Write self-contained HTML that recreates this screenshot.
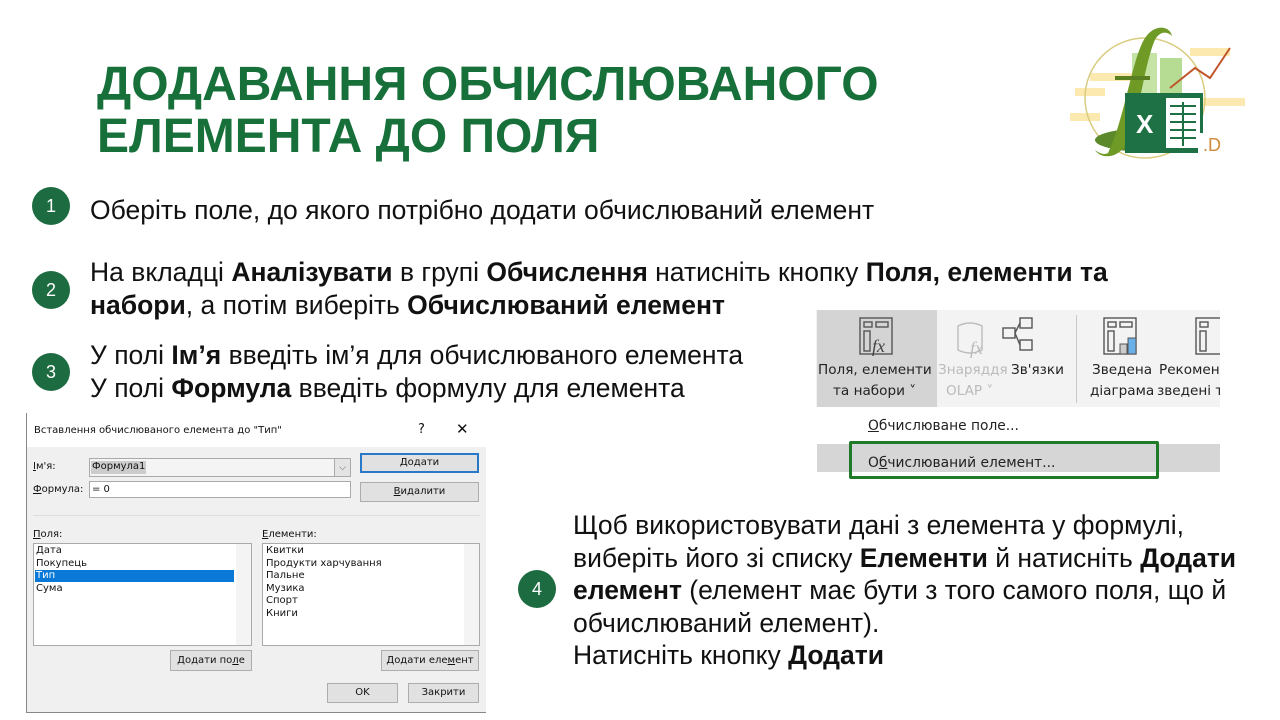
<!DOCTYPE html>
<html><head><meta charset="utf-8"><style>
*{margin:0;padding:0;box-sizing:border-box}
body{width:1280px;height:720px;background:#fff;position:relative;overflow:hidden;font-family:"Liberation Sans",Arial,sans-serif;color:#111}
.a{position:absolute}
.t{left:97px;top:59px;font-size:48px;font-weight:bold;color:#17703a;line-height:52px;white-space:nowrap}
.c{width:38px;height:38px;border-radius:50%;background:#1d6b40;color:#fff;font-size:18px;text-align:center;line-height:38px}
.p{font-size:26.5px;line-height:33px;white-space:nowrap;color:#111}
.d{font-family:"DejaVu Sans",sans-serif;font-size:10px;color:#111;white-space:nowrap}
.btn{position:absolute;background:#e1e1e1;border:1px solid #adadad;font-family:"DejaVu Sans",sans-serif;font-size:10px;text-align:center;color:#111}
.box{position:absolute;background:#fff;border:1px solid #aaa}
.r{font-family:"DejaVu Sans",sans-serif;font-size:13.6px;color:#222;white-space:nowrap;position:absolute}
</style></head><body>
<div class="a t">ДОДАВАННЯ ОБЧИСЛЮВАНОГО<br>ЕЛЕМЕНТА ДО ПОЛЯ</div>

<svg class="a" style="left:1070px;top:18px" width="180" height="145" viewBox="0 0 180 145">
<rect x="20" y="55" width="45" height="8" fill="#fbe9b0"/><rect x="5" y="70" width="30" height="8" fill="#fbe9b0"/>
<rect x="120" y="30" width="40" height="8" fill="#fbe9b0"/><rect x="130" y="80" width="45" height="8" fill="#fbe9b0"/>
<rect x="0" y="95" width="30" height="8" fill="#fbe9b0"/>
<circle cx="75" cy="80" r="60" fill="none" stroke="#d9cc80" stroke-width="1.5"/>
<rect x="62" y="35" width="25" height="90" fill="#c5e3a5"/><rect x="90" y="40" width="22" height="85" fill="#b6dc94"/>
<ellipse cx="80" cy="122" rx="55" ry="12" fill="#5c8a2a"/>
<path d="M38 135 C55 100 62 40 75 20 C85 5 100 8 102 18 C96 12 88 14 84 24 C72 55 68 110 55 128 C45 142 30 140 25 132 C30 136 35 137 38 135Z" fill="#6f9a26"/>
<path d="M45 60 H80" stroke="#5a7f20" stroke-width="4"/>
<rect x="55" y="75" width="78" height="60" fill="#1e7145"/>
<rect x="96" y="80" width="34" height="50" fill="#fff"/>
<g stroke="#1e7145" stroke-width="2"><path d="M100 88H126M100 96H126M100 104H126M100 112H126M100 120H126M113 84V128"/></g>
<text x="66" y="115" font-family="Liberation Sans" font-weight="bold" font-size="26" fill="#fff">X</text>
<path d="M100 70 L125 50 L140 60 L160 30" fill="none" stroke="#c0552a" stroke-width="2"/>
<rect x="128" y="115" width="35" height="22" fill="#fff"/>
<text x="133" y="133" font-family="Liberation Sans" font-size="18" fill="#d08a3a">.D</text>
</svg>

<div class="a c" style="left:32px;top:187px">1</div>
<div class="a c" style="left:32px;top:271px">2</div>
<div class="a c" style="left:32px;top:353px">3</div>
<div class="a c" style="left:518px;top:570px">4</div>

<div class="a p" style="left:90px;top:194px">Оберіть поле, до якого потрібно додати обчислюваний елемент</div>
<div class="a p" style="left:90px;top:256px">На вкладці <b>Аналізувати</b> в групі <b>Обчислення</b> натисніть кнопку <b>Поля, елементи та</b><br><b>набори</b>, а потім виберіть <b>Обчислюваний елемент</b></div>
<div class="a p" style="left:90px;top:339px">У полі <b>Ім’я</b> введіть ім’я для обчислюваного елемента<br>У полі <b>Формула</b> введіть формулу для елемента</div>
<div class="a p" style="left:573px;top:509px;line-height:32.5px">Щоб використовувати дані з елемента у формулі,<br>виберіть його зі списку <b>Елементи</b> й натисніть <b>Додати</b><br><b>елемент</b> (елемент має бути з того самого поля, що й<br>обчислюваний елемент).<br>Натисніть кнопку <b>Додати</b></div>

<div class="a" style="left:816px;top:310px;width:404px;height:97px;background:#f3f3f3"></div>
<div class="a" style="left:817px;top:310px;width:120px;height:97px;background:#d4d4d4"></div>
<div class="a" style="left:1076px;top:315px;width:1px;height:88px;background:#c8c8c8"></div>
<div class="a" style="left:816px;top:407px;width:404px;height:83px;background:#fff"></div>
<div class="a" style="left:817px;top:444px;width:403px;height:28px;background:#d6d6d6"></div>
<div class="a" style="left:849px;top:441px;width:310px;height:38px;border:3px solid #1f7a2a;border-radius:2px"></div>
<svg class="a" style="left:858px;top:316px" width="362" height="45">
<g fill="none" stroke="#555" stroke-width="1.4">
<rect x="2" y="2" width="32" height="36"/><rect x="6" y="6" width="8" height="5"/><rect x="18" y="6" width="12" height="5"/><rect x="6" y="15" width="6" height="20"/>
<path d="M100 10 Q112 4 124 10 V34 Q112 40 100 34Z" stroke="#bbb"/>
<rect x="162" y="2" width="12" height="10"/><rect x="162" y="24" width="12" height="10"/><rect x="145" y="12" width="12" height="10"/><path d="M157 17 L162 7 M157 17 L162 29"/>
<rect x="246" y="2" width="32" height="36"/><rect x="250" y="6" width="8" height="5"/><rect x="262" y="6" width="12" height="5"/><rect x="250" y="15" width="6" height="20"/>
<rect x="338" y="2" width="32" height="36"/><rect x="342" y="6" width="8" height="5"/><rect x="342" y="15" width="6" height="20"/>
</g>
<rect x="270" y="22" width="8" height="16" fill="#6ab0e8" stroke="#555"/><rect x="262" y="28" width="7" height="10" fill="#ccc" stroke="#555"/>
<text x="14" y="36" font-family="Liberation Serif" font-style="italic" font-size="18" fill="#444">fx</text>
<text x="112" y="38" font-family="Liberation Serif" font-style="italic" font-size="18" fill="#bbb">fx</text>
</svg>
<div class="r" style="left:818px;top:362px">Поля, елементи</div>
<div class="r" style="left:833px;top:383px">та набори ˅</div>
<div class="r" style="left:938px;top:362px;color:#bbb">Знаряддя</div>
<div class="r" style="left:946px;top:383px;color:#bbb">OLAP ˅</div>
<div class="r" style="left:1011px;top:362px">Зв'язки</div>
<div class="r" style="left:1092px;top:362px">Зведена</div>
<div class="r" style="left:1090px;top:383px">діаграма</div>
<div class="r" style="left:1159px;top:362px;width:61px;overflow:hidden">Рекомен</div>
<div class="r" style="left:1157px;top:383px;width:63px;overflow:hidden">зведені т</div>
<div class="r" style="left:868px;top:418px;font-size:13.8px"><u>О</u>бчислюване поле...</div>
<div class="r" style="left:868px;top:455px;font-size:13.8px">О<u>б</u>числюваний елемент...</div>

<div class="a" style="left:26px;top:413px;width:460px;height:300px;background:#fff;border-left:1px solid #888;border-bottom:1px solid #888"></div>
<div class="a" style="left:27px;top:447px;width:459px;height:265px;background:#f0f0f0"></div>
<div class="a d" style="left:34px;top:425px;font-size:10px">Вставлення обчислюваного елемента до "Тип"</div>
<div class="a d" style="left:418px;top:422px;font-size:13px">?</div>
<div class="a d" style="left:456px;top:420px;font-size:15px">✕</div>
<div class="a d" style="left:33px;top:461px"><u>І</u>м'я:</div>
<div class="a d" style="left:33px;top:484px"><u>Ф</u>ормула:</div>
<div class="box" style="left:89px;top:458px;width:262px;height:19px;background:#f4f4f4"></div>
<div class="a" style="left:91px;top:461px;width:55px;height:13px;background:#ccc"></div>
<div class="a d" style="left:92px;top:461px">Формула1</div>
<div class="a" style="left:334px;top:459px;width:16px;height:17px;background:#e4e4e4;border-left:1px solid #aaa;font-size:9px;text-align:center;line-height:17px;color:#555">⌵</div>
<div class="box" style="left:89px;top:481px;width:262px;height:17px"></div>
<div class="a d" style="left:92px;top:484px">= 0</div>
<div class="btn" style="left:360px;top:453px;width:119px;height:20px;border:2px solid #2a78c8;line-height:16px">Додати</div>
<div class="btn" style="left:360px;top:482px;width:119px;height:20px;line-height:18px"><u>В</u>идалити</div>
<div class="a" style="left:33px;top:515px;width:447px;height:1px;background:#ddd"></div>
<div class="a d" style="left:33px;top:529px"><u>П</u>оля:</div>
<div class="a d" style="left:262px;top:529px"><u>Е</u>лементи:</div>
<div class="box" style="left:33px;top:543px;width:219px;height:103px"></div>
<div class="a" style="left:236px;top:544px;width:15px;height:101px;background:#f4f4f4"></div>
<div class="a" style="left:35px;top:570px;width:199px;height:12px;background:#0a78d7"></div>
<div class="a d" style="left:36px;top:545px;line-height:12.5px">Дата<br>Покупець<br><span style="color:#fff">Тип</span><br>Сума</div>
<div class="box" style="left:262px;top:543px;width:218px;height:103px"></div>
<div class="a" style="left:464px;top:544px;width:15px;height:101px;background:#f4f4f4"></div>
<div class="a d" style="left:266px;top:545px;line-height:12.5px">Квитки<br>Продукти харчування<br>Пальне<br>Музика<br>Спорт<br>Книги</div>
<div class="btn" style="left:170px;top:650px;width:82px;height:21px;line-height:19px">Додати по<u>л</u>е</div>
<div class="btn" style="left:381px;top:650px;width:98px;height:21px;line-height:19px">Додати еле<u>м</u>ент</div>
<div class="btn" style="left:327px;top:683px;width:71px;height:20px;line-height:18px">OK</div>
<div class="btn" style="left:408px;top:683px;width:71px;height:20px;line-height:18px">Закрити</div>
</body></html>
